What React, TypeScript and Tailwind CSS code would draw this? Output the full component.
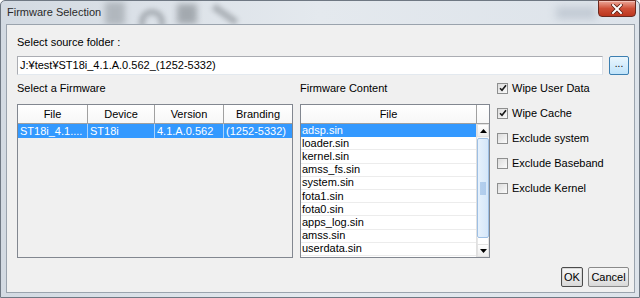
import React from "react";

const contentFiles = [
  "adsp.sin",
  "loader.sin",
  "kernel.sin",
  "amss_fs.sin",
  "system.sin",
  "fota1.sin",
  "fota0.sin",
  "apps_log.sin",
  "amss.sin",
  "userdata.sin",
  "modem.sin",
];

const firmwareCols = [
  { label: "File", value: "ST18i_4.1....", w: "w-[70px]" },
  { label: "Device", value: "ST18i", w: "w-[67px]" },
  { label: "Version", value: "4.1.A.0.562", w: "w-[69px]" },
  { label: "Branding", value: "(1252-5332)", w: "w-[68px]" },
];

const options = [
  { label: "Wipe User Data", checked: true },
  { label: "Wipe Cache", checked: true },
  { label: "Exclude system", checked: false },
  { label: "Exclude Baseband", checked: false },
  { label: "Exclude Kernel", checked: false },
];

const CheckBox = ({ checked }: { checked: boolean }) => (
  <div className="flex h-[11px] w-[11px] items-center justify-center border border-[#8e8f8f] bg-gradient-to-br from-[#dcdcdc] to-[#fbfbfb]">
    {checked && (
      <svg width="8" height="8" viewBox="0 0 8 8">
        <path d="M1 4.2 L3 6.3 L7 1.2" fill="none" stroke="#1a1a1a" strokeWidth="1.6" />
      </svg>
    )}
  </div>
);

const ScrollArrow = ({ up }: { up: boolean }) => (
  <div className="flex h-[13px] items-center justify-center border border-[#e2e2e2] bg-gradient-to-b from-white to-[#ececec]">
    <svg width="7" height="4" viewBox="0 0 7 4">
      <path d={up ? "M0 4 L3.5 0 L7 4 Z" : "M0 0 L7 0 L3.5 4 Z"} fill="#000" />
    </svg>
  </div>
);

const Button = ({ label, isDefault, w }: { label: string; isDefault?: boolean; w: string }) => (
  <div
    className={`flex h-[20px] ${w} items-center justify-center rounded-[2px] border ${
      isDefault ? "border-[#4b4b4b] shadow-[inset_0_0_0_1px_#d8d8d8]" : "border-[#8a8a8a]"
    } bg-gradient-to-b from-[#f6f6f6] via-[#ebebeb] to-[#d8d8d8] text-[11px]`}
  >
    {label}
  </div>
);

export default function App() {
  return (
    <div className="h-[298px] w-[640px] overflow-hidden bg-white font-['Liberation_Sans',Arial,sans-serif] text-[11px] leading-none text-black">
      <div className="relative flex h-full flex-col rounded-t-[5px] border border-[#6f7883] bg-gradient-to-r from-[#d3dae2] via-[#e4e9ee] to-[#dde3ea]">
        {/* blurred desktop behind the glass */}
        <div className="absolute left-[104px] top-[1px] h-[23px] w-[20px] bg-[#8a9096] opacity-50 blur-[3px]" />
        <div className="absolute left-[138px] top-[8px] h-[18px] w-[26px] rounded-t-full border-[6px] border-b-0 border-[#6d7379] opacity-45 blur-[2.5px]" />
        <div className="absolute left-[176px] top-[3px] h-[20px] w-[20px] bg-[#5f656b] opacity-45 blur-[3px]" />
        <div className="absolute left-[210px] top-[10px] h-[7px] w-[28px] rotate-[35deg] bg-[#6d7379] opacity-45 blur-[2.5px]" />
        <div className="absolute left-[555px] top-[6px] h-[12px] w-[40px] bg-[#8b98a8] opacity-35 blur-[4px]" />

        <div className="relative flex h-[23px] items-start justify-between">
          <span className="pl-[6px] pt-[6px] text-[11px] text-[#2a2a2a]">Firmware Selection</span>
          <div className="mr-[3px] mt-[-1px] flex h-[17px] w-[38px] items-center justify-center rounded-b-[4px] border border-[#6b2a20] bg-gradient-to-b from-[#eba698] via-[#cf5038] to-[#bb361e] shadow-[inset_0_1px_0_#f3c2b8]">
            <svg width="12" height="10" viewBox="0 0 12 10">
              <path d="M2 1 L10 9 M10 1 L2 9" stroke="#5a1d12" strokeWidth="3.6" strokeLinecap="square" />
              <path d="M2 1 L10 9 M10 1 L2 9" stroke="#ffffff" strokeWidth="2" strokeLinecap="square" />
            </svg>
          </div>
        </div>

        <div className="relative ml-[5px] mr-[4px] flex h-[269px] flex-col border border-[#9aa3ad] bg-[#f0f0f0] pl-[10px] pr-[5px] pt-[10px]">
          <div className="h-[14px] leading-[14px]">Select source folder :</div>

          <div className="mt-[7px] flex h-[19px] gap-[6px]">
            <div className="flex w-[586px] items-center border border-[#abadb3] border-b-[#e3e9ef] border-r-[#dbdfe6] bg-white pl-[2px]">
              J:¥test¥ST18i_4.1.A.0.562_(1252-5332)
            </div>
            <div className="flex w-[20px] items-center justify-center rounded-[2px] border border-[#3c7fb1] bg-gradient-to-b from-[#eaf6fd] to-[#bfe3fa] pb-[3px] text-[10px]">
              ...
            </div>
          </div>

          <div className="mt-[6px] flex gap-[7px]">
            <div className="flex w-[276px] flex-col">
              <div className="h-[14px] leading-[14px]">Select a Firmware</div>
              <div className="mt-[9px] flex h-[154px] flex-col border border-[#828790] bg-[#f0f0f0]">
                <div className="flex h-[19px] border-b border-[#a0a0a0] bg-gradient-to-b from-white to-[#f7f7f7]">
                  {firmwareCols.map((c, i) => (
                    <div
                      key={c.label}
                      className={`flex ${c.w} items-center justify-center ${i < 3 ? "border-r border-[#a0a0a0]" : ""}`}
                    >
                      {c.label}
                    </div>
                  ))}
                </div>
                <div className="flex h-[14px] bg-[#3399ff] text-white">
                  {firmwareCols.map((c, i) => (
                    <div
                      key={c.label}
                      className={`flex ${c.w} items-center whitespace-nowrap pl-[2px] ${i < 3 ? "border-r border-[#a9d2fb]" : ""}`}
                    >
                      {c.value}
                    </div>
                  ))}
                </div>
              </div>
            </div>

            <div className="flex w-[190px] flex-col">
              <div className="h-[14px] leading-[14px]">Firmware Content</div>
              <div className="mt-[9px] flex h-[154px] flex-col border border-[#828790] bg-white">
                <div className="flex h-[19px] border-b border-[#a0a0a0] bg-gradient-to-b from-white to-[#f7f7f7]">
                  <div className="flex w-[176px] items-center justify-center border-r border-[#a0a0a0]">File</div>
                  <div className="flex-1" />
                </div>
                <div className="flex min-h-0 flex-1">
                  <div className="flex w-[176px] flex-col overflow-hidden border-r border-[#e0e0e0]">
                    {contentFiles.map((f, i) => (
                      <div
                        key={f}
                        className={`flex h-[13.2px] shrink-0 items-center border-b pl-[1px] ${
                          i === 0 ? "border-[#3399ff] bg-[#3399ff] text-white" : "border-[#ececec]"
                        }`}
                      >
                        {f}
                      </div>
                    ))}
                  </div>
                  <div className="flex w-[12px] flex-col bg-[#f7f7f7]">
                    <ScrollArrow up />
                    <div className="mt-[1px] flex h-[100px] items-center justify-center rounded-[2px] border border-[#9dbfe4] bg-gradient-to-r from-[#e6f1fc] to-[#d5e7fa]">
                      <div className="h-[13px] w-[6px] bg-[radial-gradient(#7fa9dc_0.6px,transparent_0.8px)] bg-[length:2px_2px]" />
                    </div>
                    <div className="flex-1 border-x border-[#e6e6e6] bg-white" />
                    <ScrollArrow up={false} />
                  </div>
                </div>
              </div>
            </div>

            <div className="flex flex-col gap-[11px]">
              {options.map((o) => (
                <div key={o.label} className="flex h-[14px] items-center gap-[4px]">
                  <CheckBox checked={o.checked} />
                  <span className="leading-[14px]">{o.label}</span>
                </div>
              ))}
            </div>
          </div>

          <div className="mt-[9px] flex justify-end gap-[5px]">
            <Button label="OK" isDefault w="w-[22px]" />
            <Button label="Cancel" w="w-[41px]" />
          </div>
        </div>
      </div>
    </div>
  );
}
